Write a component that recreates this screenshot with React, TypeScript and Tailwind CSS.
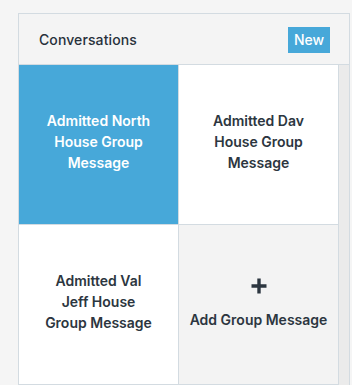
import React from "react";

const font = { fontFamily: "Inter, 'Noto Sans', sans-serif" };

function Tile({ children, className }: { children: React.ReactNode; className: string }) {
  return (
    <div
      className={`w-[160px] h-[160px] border-r border-b border-[#d3dbe1] flex flex-col items-center justify-center text-center text-[14px] leading-[21px] font-semibold ${className}`}
    >
      {children}
    </div>
  );
}

export default function App() {
  return (
    <div className="w-[352px] h-[385px] bg-[#f5f5f5] pt-[13px] pl-[18px] overflow-hidden" style={font}>
      <div className="w-[332px] border-l border-t border-r border-[#d3dbe1] bg-[#f4f4f4]">
        <div className="h-[51px] border-b border-[#d3dbe1] flex items-center justify-between pl-[20px] pr-[19px]">
          <span className="text-[14px] font-medium text-[#28313b] tracking-[0.1px]">Conversations</span>
          <span className="h-[26px] w-[42px] flex items-center justify-center bg-[#47a8d9] text-white text-[14px] font-medium mt-[1px]">
            New
          </span>
        </div>
        <div className="flex">
          <div className="grid grid-cols-2 w-[320px]">
            <Tile className="bg-[#47a8d9] text-white px-6 pb-[7px]">
              <span>Admitted North House Group Message</span>
            </Tile>
            <Tile className="bg-white text-[#2c3640] px-6 pb-[7px]">
              <span>Admitted Dav House Group Message</span>
            </Tile>
            <Tile className="bg-white text-[#2c3640] px-6 pb-[7px]">
              <span>Admitted Val Jeff House Group Message</span>
            </Tile>
            <Tile className="bg-[#f3f3f3] text-[#2c3640] whitespace-nowrap px-2 pb-[2px]">
              <svg width="18" height="18" viewBox="0 0 18 18" className="mb-[14px]">
                <path d="M9 1.5V16.5M1.5 9H16.5" stroke="#2c3640" strokeWidth="3.4" />
              </svg>
              <span>Add Group Message</span>
            </Tile>
          </div>
          <div className="w-[10px] bg-[#ebebeb]" />
        </div>
      </div>
    </div>
  );
}
